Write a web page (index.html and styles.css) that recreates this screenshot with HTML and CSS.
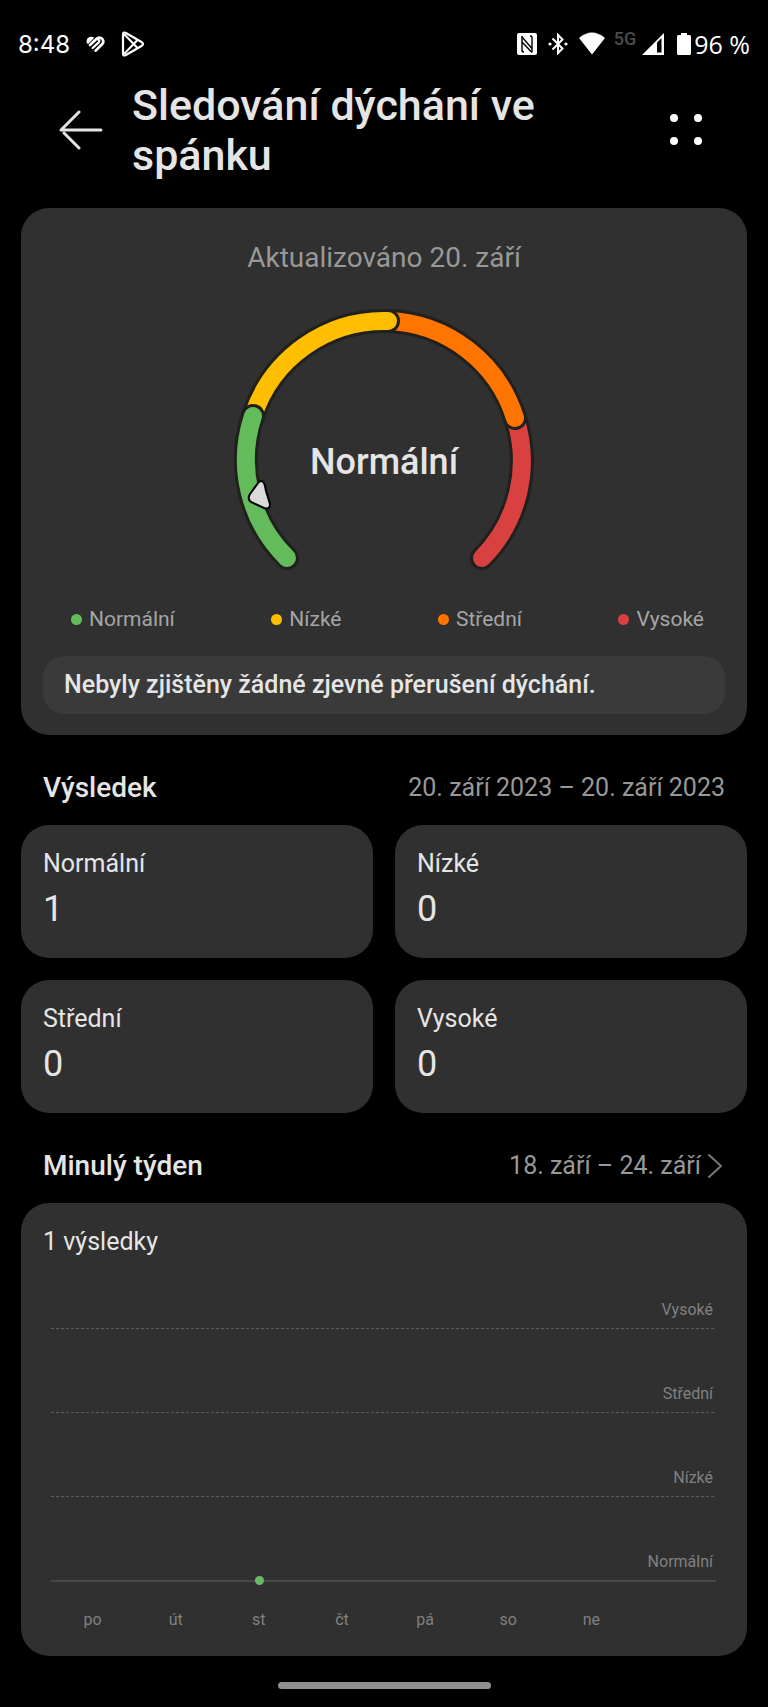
FILE: index.html
```html
<!DOCTYPE html>
<html lang="cs">
<head>
  <meta charset="UTF-8" />
  <meta name="viewport" content="width=device-width, initial-scale=1.0"/>
  <title>Sledování dýchání ve spánku</title>
  <link rel="stylesheet" href="styles.css">
</head>
<body>
  <div class="status-bar">
    <div class="status-left">
      <span class="clock">8:48</span>
      <svg width="19" height="16" viewBox="0 0 57 48" fill="none" stroke="#fff" stroke-width="8" stroke-linecap="round" stroke-linejoin="round">
        <path d="M2 20Q0 8 10 3Q18 0 25 5L7 23Q3 24 2 20Z" fill="#fff" stroke="none"/>
        <path d="M12 27 31 9"/>
        <path d="M20 36 38 19Q42 15 38 12" stroke-width="7"/>
        <path d="M29 44 49 24Q55 17 49 9Q42 2 34 7"/>
      </svg>
      <svg width="24" height="26" viewBox="0 0 24 26" fill="none" stroke="#fff" stroke-width="2.2" stroke-linejoin="round">
        <path d="M2 3.5Q2 .8 4.5 1.8L20.5 11Q23.5 13 20.5 15L4.5 24.2Q2 25.2 2 22.5Z"/>
        <path d="M3 3 17 17.5M3 23 17 8.5" stroke-width="2"/>
      </svg>
    </div>
    <div class="status-right">
      <svg width="22" height="22" viewBox="0 0 22 22">
        <rect x="1" y="0" width="20" height="22" rx="2" fill="#fff"/>
        <path d="M6 3V17.5Q6 19 8 19M16 19V4.5Q16 3 14 3" fill="none" stroke="#000" stroke-width="1.4"/>
        <path d="M6 4 16 15.5M6 9 16 19.5" fill="none" stroke="#000" stroke-width="1.4"/>
      </svg>
      <svg width="20" height="24" viewBox="0 0 20 24">
        <path d="M4.5 6.5 14.5 16.5 10 21V3L14.5 7.5 4.5 17.5" fill="none" stroke="#fff" stroke-width="2"/>
        <circle cx="2" cy="12" r="1.6" fill="#fff"/>
        <circle cx="18" cy="12" r="1.6" fill="#fff"/>
      </svg>
      <svg width="28" height="24" viewBox="0 0 28 24">
        <path d="M1 6Q14-5 27 6L14 22.5Z" fill="#fff"/>
      </svg>
      <span class="network">5G</span>
      <svg width="24" height="24" viewBox="0 0 24 24">
        <path d="M1 23 23 1V23Z" fill="#fff"/>
        <path d="M16 10.5 20.5 6V20.5H16Z" fill="#000"/>
      </svg>
      <span class="battery">
        <svg width="14" height="24" viewBox="0 0 14 24">
          <path d="M4 1H10V3H12.5Q14 3 14 4.5V21.5Q14 23 12.5 23H1.5Q0 23 0 21.5V4.5Q0 3 1.5 3H4Z" fill="#fff"/>
        </svg>
        <span>96 %</span>
      </span>
    </div>
  </div>

  <header class="header">
    <button class="icon-btn" aria-label="Zpět">
      <svg width="44" height="40" viewBox="0 0 44 40" fill="none" stroke="#e3e3e3" stroke-width="3" stroke-linecap="round" stroke-linejoin="round">
        <path d="M42 20H2L20 2M5 23 20 38"/>
      </svg>
    </button>
    <h1>Sledování dýchání ve spánku</h1>
    <button class="icon-btn" aria-label="Nabídka">
      <svg width="34" height="34" viewBox="0 0 34 34" fill="#fff">
        <circle cx="5" cy="5" r="4"/>
        <circle cx="29" cy="5" r="4"/>
        <circle cx="5" cy="28" r="4"/>
        <circle cx="29" cy="28" r="4"/>
      </svg>
    </button>
  </header>

  <main>
    <section class="card summary">
      <p class="updated">Aktualizováno 20. září</p>

      <div class="gauge">
        <svg width="300" height="266" viewBox="0 0 300 266" fill="none" stroke-linecap="round">
          <!-- red -->
          <path class="edge" d="M281 113A138 138 0 0 1 248 253"/>
          <path class="arc high" d="M281 113A138 138 0 0 1 248 253"/>
          <!-- orange -->
          <path class="edge" d="M154 16A138 138 0 0 1 281 113"/>
          <path class="arc medium" d="M154 16A138 138 0 0 1 281 113"/>
          <!-- yellow -->
          <path class="edge" d="M19 111A138 138 0 0 1 154 16"/>
          <path class="arc low" d="M19 111A138 138 0 0 1 154 16"/>
          <!-- green -->
          <path class="edge" d="M53 253A138 138 0 0 1 19 111"/>
          <path class="arc normal" d="M53 253A138 138 0 0 1 19 111"/>
          <!-- pointer -->
          <path d="M24 178Q27 174 30 178Q31 180 32 186L36 199Q36 205 30 203L17 197Q13 194 16 189Z" fill="#dadada" stroke="#000" stroke-width="2"/>
        </svg>
        <strong class="gauge-label">Normální</strong>
      </div>

      <ul class="legend">
        <li><span class="dot normal"></span>Normální</li>
        <li><span class="dot low"></span>Nízké</li>
        <li><span class="dot medium"></span>Střední</li>
        <li><span class="dot high"></span>Vysoké</li>
      </ul>

      <p class="notice">Nebyly zjištěny žádné zjevné přerušení dýchání.</p>
    </section>

    <div class="section-head">
      <h2>Výsledek</h2>
      <span class="range">20. září 2023 – 20. září 2023</span>
    </div>

    <dl class="stats">
      <div class="card stat"><dt>Normální</dt><dd>1</dd></div>
      <div class="card stat"><dt>Nízké</dt><dd>0</dd></div>
      <div class="card stat"><dt>Střední</dt><dd>0</dd></div>
      <div class="card stat"><dt>Vysoké</dt><dd>0</dd></div>
    </dl>

    <div class="section-head">
      <h2>Minulý týden</h2>
      <button class="range">
        18. září – 24. září
        <svg width="18" height="26" viewBox="0 0 18 26" fill="none" stroke="#777" stroke-width="2" stroke-linecap="round" stroke-linejoin="round">
          <path d="M2 2 14 13 2 24"/>
        </svg>
      </button>
    </div>

    <section class="card week">
      <p class="week-count">1 výsledky</p>
      <div class="chart">
        <div class="level">Vysoké</div>
        <div class="level">Střední</div>
        <div class="level">Nízké</div>
        <div class="level base">Normální<span class="point" style="left: 31.25%"></span></div>
      </div>
      <div class="days">
        <span>po</span>
        <span>út</span>
        <span>st</span>
        <span>čt</span>
        <span>pá</span>
        <span>so</span>
        <span>ne</span>
      </div>
    </section>
  </main>

  <div class="home-bar"></div>
</body>
</html>
```
FILE: styles.css
```css
:root {
  --bg: #000;
  --card: #303030;
  --card-inner: #3a3a3a;
  --text: #e5e5e5;
  --muted: #989898;
  --faint: #808080;
  --normal: #64bb5c;
  --low: #ffbf00;
  --medium: #ff7500;
  --high: #d94141;
}

* {
  margin: 0;
  padding: 0;
  box-sizing: border-box;
}

body {
  background: var(--bg);
  color: var(--text);
  font-family: Roboto, sans-serif;
}

button {
  background: none;
  border: none;
  font-family: inherit;
  cursor: pointer;
}

svg {
  display: block;
}

/* Status bar */
.status-bar {
  display: flex;
  justify-content: space-between;
  align-items: center;
  height: 80px;
  padding: 8px 18px 0;
  color: #fff;
}

.status-left,
.status-right {
  display: flex;
  align-items: center;
}

.status-left {
  gap: 16px;
}

.status-right {
  gap: 10px;
}

.clock {
  padding-top: 2px;
  font-family: Inter, sans-serif;
  font-size: 24px;
  line-height: 30px;
}

.network {
  margin: 0 -5px 10px -2px;
  color: #4c4c4c;
  font-size: 18px;
  font-weight: 500;
  line-height: 20px;
}

.battery {
  display: flex;
  align-items: center;
  gap: 3px;
  margin-left: 2px;
  font-family: "Open Sans", sans-serif;
  font-size: 25px;
  line-height: 30px;
}

/* Header */
.header {
  display: flex;
  align-items: center;
  padding: 0 65px 0 59px;
}

.header h1 {
  flex: 1;
  margin: 0 120px 0 29px;
  font-size: 43px;
  font-weight: 500;
  line-height: 50px;
}

/* Cards */
main {
  padding: 28px 21px 0;
}

.card {
  background: var(--card);
  border-radius: 28px;
}

.summary {
  padding: 33px 22px 21px;
}

.updated {
  color: var(--muted);
  font-size: 28px;
  line-height: 34px;
  text-align: center;
}

.gauge {
  display: grid;
  justify-items: center;
  align-items: end;
  margin-top: 30px;
}

.gauge > * {
  grid-area: 1 / 1;
}

.gauge-label {
  padding-bottom: 88px;
  font-size: 36px;
  font-weight: 500;
  line-height: 42px;
}

.edge {
  stroke: #20201c;
  stroke-width: 24px;
}

.arc {
  stroke-width: 18px;
}

.arc.normal { stroke: var(--normal); }
.arc.low { stroke: var(--low); }
.arc.medium { stroke: var(--medium); }
.arc.high { stroke: var(--high); }

.legend {
  display: flex;
  justify-content: space-between;
  margin-top: 35px;
  padding: 0 21px 0 28px;
  list-style: none;
  color: #a5a5a5;
  font-size: 21px;
  line-height: 26px;
}

.legend li {
  display: flex;
  align-items: center;
  gap: 7px;
}

.dot {
  width: 11px;
  height: 11px;
  border-radius: 50%;
}

.dot.normal { background: var(--normal); }
.dot.low { background: var(--low); }
.dot.medium { background: var(--medium); }
.dot.high { background: var(--high); }

.notice {
  margin-top: 24px;
  padding: 14px 21px;
  background: var(--card-inner);
  border-radius: 21px;
  font-size: 25px;
  font-weight: 500;
  line-height: 30px;
}

/* Section headings */
.section-head {
  display: flex;
  justify-content: space-between;
  align-items: center;
  padding: 36px 22px 20px;
}

.section-head h2 {
  font-size: 28px;
  font-weight: 500;
  line-height: 34px;
}

.range {
  display: flex;
  align-items: center;
  gap: 6px;
  color: var(--muted);
  font-size: 25px;
  line-height: 30px;
}

/* Result tiles */
.stats {
  display: grid;
  grid-template-columns: 1fr 1fr;
  gap: 22px;
}

.stat {
  padding: 24px 22px 28px;
}

.stat dt {
  font-size: 25px;
  line-height: 30px;
}

.stat dd {
  margin-top: 9px;
  font-size: 36px;
  line-height: 42px;
}

/* Week chart */
.week {
  padding: 24px 31px 26px 30px;
}

.week-count {
  margin-left: -8px;
  font-size: 25px;
  line-height: 30px;
}

.chart {
  display: flex;
  flex-direction: column;
  gap: 55px;
  margin-top: 43px;
  color: var(--faint);
  font-size: 16px;
  line-height: 20px;
}

.level {
  padding: 0 3px 9px 0;
  background: repeating-linear-gradient(90deg, #5c5c5c 0 3px, transparent 3px 5px) bottom / 100% 1px no-repeat;
  text-align: right;
}

.level.base {
  position: relative;
  padding-bottom: 8px;
  background: none;
  border-bottom: 2px solid #484848;
}

.point {
  position: absolute;
  bottom: -5px;
  width: 9px;
  height: 9px;
  margin-left: -4px;
  border-radius: 50%;
  background: #6cb866;
}

.days {
  display: grid;
  grid-template-columns: repeat(8, 1fr);
  margin-top: 28px;
  color: var(--faint);
  font-size: 16px;
  line-height: 20px;
  text-align: center;
}

.home-bar {
  width: 213px;
  height: 7px;
  margin: 26px auto 18px;
  border-radius: 4px;
  background: #8f8f8f;
}
```
